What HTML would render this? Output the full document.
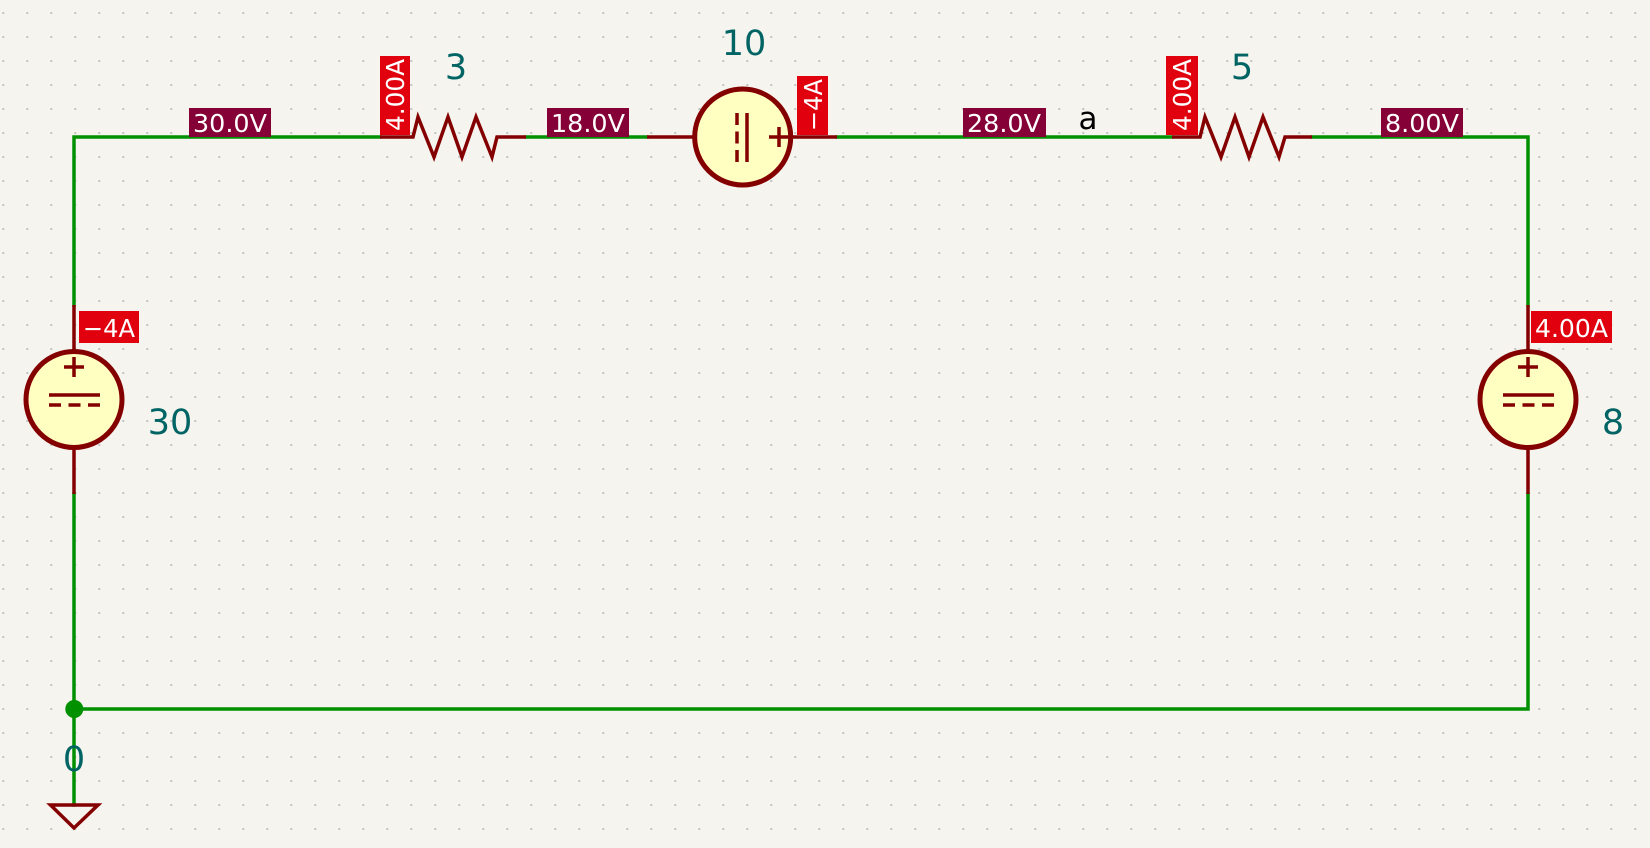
<!DOCTYPE html>
<html><head><meta charset="utf-8"><style>
html,body{margin:0;padding:0;background:#f5f4ef;}
svg{display:block}
text{font-family:"DejaVu Sans","Liberation Sans",sans-serif;}
</style></head><body>
<svg width="1650" height="848" viewBox="0 0 1650 848" xmlns="http://www.w3.org/2000/svg">
<defs>
<pattern id="g" x="3.3" y="13" width="24" height="24" patternUnits="userSpaceOnUse">
<rect x="-1" y="-1" width="2" height="2" fill="#c4c4c2"/>
<rect x="23" y="-1" width="2" height="2" fill="#c4c4c2"/>
<rect x="-1" y="23" width="2" height="2" fill="#c4c4c2"/>
<rect x="23" y="23" width="2" height="2" fill="#c4c4c2"/>
</pattern>
</defs>
<rect width="1650" height="848" fill="#f5f4ef"/>
<rect width="1650" height="848" fill="url(#g)"/>

<g fill="none" stroke-linecap="square">
<path d="M74 305 V137 H380 M526 137 H647 M837 137 H1172 M1312 137 H1528 V305 M1528 494 V709 H74 V494 M74 709 V805" stroke="#009000" stroke-width="3.5"/>
</g>
<circle cx="74.3" cy="709" r="9" fill="#009000"/>

<g stroke="#840000" stroke-width="3.5" fill="none">
<path d="M380 137 H413 L418 117 L434 157 L448 117 L462 157 L476 117 L492 157 L497 137 H526"/>
<path d="M1172 137 H1200 L1205 117 L1221 157 L1235 117 L1249 157 L1263 117 L1279 157 L1285 137 H1312"/>
<path d="M647 137 H693 M792 137 H837"/>
<circle cx="742.7" cy="137" r="48" fill="#ffffc2" stroke-width="5"/>
<path d="M747 113 V162"/>
<path d="M737 113 V162" stroke-dasharray="12 6.5"/>
<path d="M769 137 H790 M779 127 V147"/>
<path d="M74 305 V352 M74 448 V494"/>
<circle cx="74" cy="399.5" r="48" fill="#ffffc2" stroke-width="5"/>
<path d="M64 367 H84 M74 357 V377 M49 395 H100"/>
<path d="M1528 305 V352 M1528 448 V494"/>
<circle cx="1528" cy="399.5" r="48" fill="#ffffc2" stroke-width="5"/>
<path d="M1518 367 H1538 M1528 357 V377 M1503 395 H1554"/>
<path d="M49 405 H100" stroke-dasharray="12 7.5"/>
<path d="M1503 405 H1554" stroke-dasharray="12 7.5"/>
<path d="M50.5 805 H98 L74 828 Z"/>
</g>

<g font-size="25" fill="#fff">
<rect x="189" y="108" width="82" height="29" fill="#840036"/>
<text x="193" y="132" textLength="74" lengthAdjust="spacingAndGlyphs">30.0V</text>
<rect x="547" y="108" width="82" height="29" fill="#840036"/>
<text x="551" y="132" textLength="74" lengthAdjust="spacingAndGlyphs">18.0V</text>
<rect x="963" y="108" width="83" height="29" fill="#840036"/>
<text x="967" y="132" textLength="74" lengthAdjust="spacingAndGlyphs">28.0V</text>
<rect x="1381" y="108" width="82" height="29" fill="#840036"/>
<text x="1385" y="132" textLength="74" lengthAdjust="spacingAndGlyphs">8.00V</text>
</g>
<g font-size="25" fill="#fff">
<rect x="380" y="56" width="30" height="79" fill="#e0000e"/>
<text transform="translate(404,131) rotate(-90)" textLength="72" lengthAdjust="spacingAndGlyphs">4.00A</text>
<rect x="1166" y="56" width="32" height="79" fill="#e0000e"/>
<text transform="translate(1191,131) rotate(-90)" textLength="72" lengthAdjust="spacingAndGlyphs">4.00A</text>
<rect x="797" y="76" width="31" height="59" fill="#e0000e"/>
<text transform="translate(822,131) rotate(-90)" textLength="52" lengthAdjust="spacingAndGlyphs">−4A</text>
<rect x="79" y="311" width="60" height="32" fill="#e0000e"/>
<text x="83" y="337" textLength="52" lengthAdjust="spacingAndGlyphs">−4A</text>
<rect x="1531" y="311" width="81" height="32" fill="#e0000e"/>
<text x="1535" y="337" textLength="73" lengthAdjust="spacingAndGlyphs">4.00A</text>
</g>
<g fill="#006464" font-size="35" text-anchor="middle">
<text x="456" y="79">3</text>
<text x="744" y="55">10</text>
<text x="1242" y="79">5</text>
<text x="170" y="434">30</text>
<text x="1613" y="434">8</text>
<text x="74" y="771">0</text>
</g>
<text x="1088" y="129" font-size="31" fill="#000" text-anchor="middle">a</text>
</svg>
</body></html>
